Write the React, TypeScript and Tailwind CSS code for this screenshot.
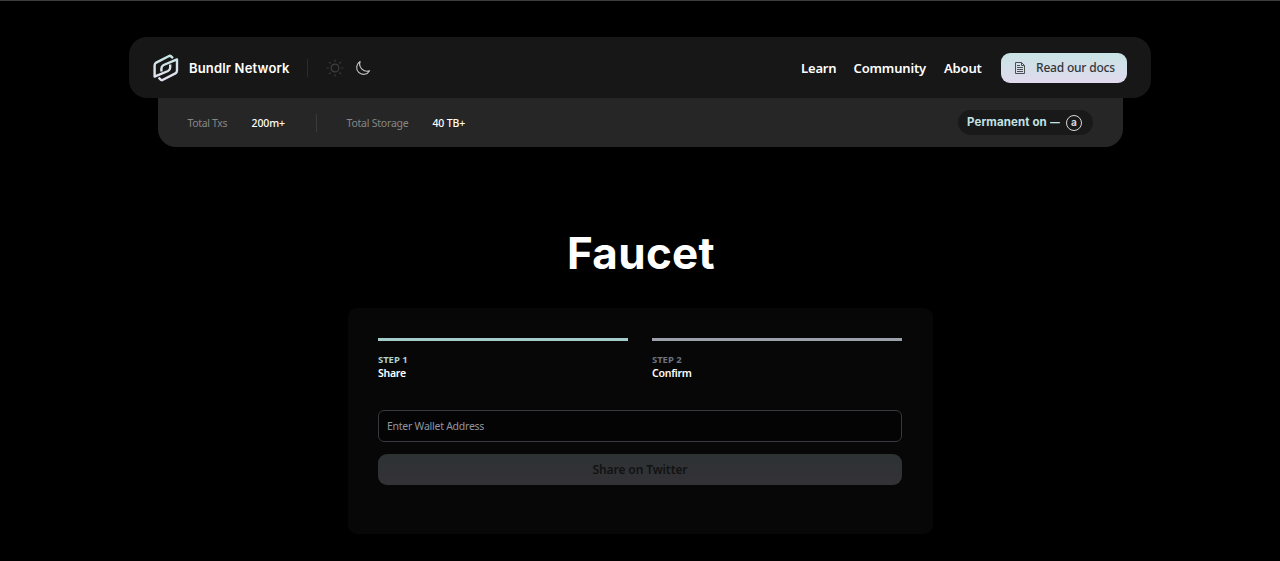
import React from "react";

function Logo() {
  return (
    <svg width="26" height="28" viewBox="0 0 26 28" fill="none" strokeWidth="2.4" strokeLinejoin="round" className="shrink-0">
      <defs>
        <linearGradient id="brand" x1="0" y1="0" x2="0" y2="28" gradientUnits="userSpaceOnUse">
          <stop stopColor="#c5e5e6" />
          <stop offset="1" stopColor="#e8e0f2" />
        </linearGradient>
      </defs>
      <g stroke="url(#brand)">
        <path d="M20 4.2 L17.6 2 L16.6 1.8 L3.2 8.6 Q1.6 9.6 1.6 11.5 V22.6 L15 17 Q17.2 15.8 17.2 13.5 V10.5" />
        <path d="M5.6 23.6 L8 25.8 L9 26.2 L22.4 19.4 Q24 18.4 24 16.5 V5.4 L10.6 11 Q8.4 12.2 8.4 14.5 V17.5" />
      </g>
    </svg>
  );
}

function Sun() {
  return (
    <svg width="18" height="18" viewBox="0 0 18 18" fill="none" stroke="#414141" strokeWidth="1.1" strokeLinecap="round">
      <circle cx="9" cy="9" r="3.9" />
      <path d="M9 1.1v1.1M9 15.8v1.1M1.1 9h1.1M15.8 9h1.1M3.4 3.4l.8.8M13.8 13.8l.8.8M3.4 14.6l.8-.8M13.8 4.2l.8-.8" />
    </svg>
  );
}

function Moon() {
  return (
    <svg width="16" height="16" viewBox="0 0 16 16" fill="none" stroke="#c8c8c8" strokeWidth="1.1" strokeLinejoin="round">
      <path d="M5.1 1.5A6.9 6.9 0 1 0 14.6 10.8A7.4 7.4 0 0 1 5.1 1.5Z" />
    </svg>
  );
}

function Doc() {
  return (
    <svg width="12" height="14" viewBox="0 0 12 14" fill="none" stroke="#4b4e53" strokeWidth="1">
      <path d="M1.5 1.5H7.5L10.5 4.5V12.5H1.5Z M7.5 1.5V4.5H10.5 M3 4.5H6 M3 6.5H9 M3 8.5H9 M3 10.5H9" />
    </svg>
  );
}

function Step({ bar, label, labelColor, title }: { bar: string; label: string; labelColor: string; title: string }) {
  return (
    <div className={`flex-1 border-t-3 pt-3 ${bar}`}>
      <div className={`text-[9.5px] leading-[13px] font-bold tracking-[-0.05px] ${labelColor}`}>{label}</div>
      <div className="text-[10.5px] leading-[14px] font-semibold tracking-[-0.25px] text-white">{title}</div>
    </div>
  );
}

export default function App() {
  return (
    <div className="h-[561px] overflow-hidden border-t border-[#3c3c3c] bg-black font-['Noto_Sans','Open_Sans',sans-serif] text-white">
      <header className="mx-auto mt-9 flex h-[61px] w-[1022px] items-center rounded-[18px] bg-[#171717] pr-6 pl-6">
        <Logo />
        <span className="ml-[10px] w-[101px] pt-0.5 font-['Inter',sans-serif] text-[13px] font-semibold tracking-[0.17px] whitespace-nowrap">Bundlr Network</span>
        <span className="ml-[17px] h-[18px] w-px bg-[#2b2b2b]" />
        <div className="ml-[18px] flex items-center gap-[11px]">
          <Sun />
          <Moon />
        </div>
        <nav className="ml-auto flex items-center text-[13px] font-semibold tracking-[-0.15px] whitespace-nowrap">
          <a className="w-[52.5px] pt-0.5">Learn</a>
          <a className="w-[90.5px] pt-0.5">Community</a>
          <a className="w-[57px] pt-0.5">About</a>
          <a className="flex h-[30px] w-[126px] items-center gap-[10px] rounded-[9px] bg-linear-to-b from-[#c8e3e5] to-[#e0daed] pl-[13px] text-[12px] font-medium tracking-[-0.2px] text-[#33363b]">
            <Doc />
            <span className="pt-px">Read our docs</span>
          </a>
        </nav>
      </header>

      <section className="mx-auto flex h-[49px] w-[965px] items-center rounded-b-[18px] bg-[#262626] pr-[30px] pl-[30px] text-[10.5px] whitespace-nowrap">
        <span className="w-[64px] pt-0.5 tracking-[-0.35px] text-[#868686]">Total Txs</span>
        <span className="w-[64px] pt-0.5 font-medium tracking-[-0.12px]">200m+</span>
        <span className="h-[18px] w-px bg-[#3b3b3b]" />
        <span className="ml-[30px] w-[86px] pt-0.5 tracking-[-0.22px] text-[#868686]">Total Storage</span>
        <span className="pt-0.5 font-medium tracking-[-0.15px]">40 TB+</span>
        <div className="ml-auto flex h-[25px] w-[135px] items-center rounded-full bg-[#191919] pl-[9.5px] font-['Inter',sans-serif] text-[11.5px] font-bold text-[#c3e1e3]">
          <span className="flex w-[99px] gap-[3px]">
            <span className="tracking-[0.12px]">Permanent on</span>
            <span className="inline-block origin-left scale-x-85">—</span>
          </span>
          <span className="flex size-[16px] items-center justify-center rounded-full border-[1.5px] border-[#d8d8d8] pb-px text-[10px] leading-none font-bold text-[#d8d8d8]">a</span>
        </div>
      </section>

      <main className="flex flex-col items-center">
        <h1 className="mt-[77px] pl-0.5 font-['Inter',sans-serif] text-[44px] leading-[58px] font-bold tracking-[0.3px]">Faucet</h1>
        <section className="mt-[26px] h-[226px] w-[585px] rounded-[9px] bg-[#070707] px-[30.5px] pt-[30px]">
          <div className="flex gap-6">
            <Step bar="border-[#a3cccb]" label="STEP 1" labelColor="text-[#a9d1d0]" title="Share" />
            <Step bar="border-[#9ca0ab]" label="STEP 2" labelColor="text-[#6b7280]" title="Confirm" />
          </div>
          <input
            className="mt-[30px] block h-[32px] w-full rounded-[6px] border border-[#37393f] bg-[#040404] px-2 text-[10.5px] tracking-[-0.25px] placeholder:text-[#9096a2]"
            placeholder="Enter Wallet Address"
          />
          <button className="mt-3 block h-[31px] w-full rounded-[9px] bg-linear-to-b from-[#2d3233] to-[#343237] text-[12px] font-semibold tracking-[-0.1px] text-[#111213]">Share on Twitter</button>
        </section>
      </main>
    </div>
  );
}
